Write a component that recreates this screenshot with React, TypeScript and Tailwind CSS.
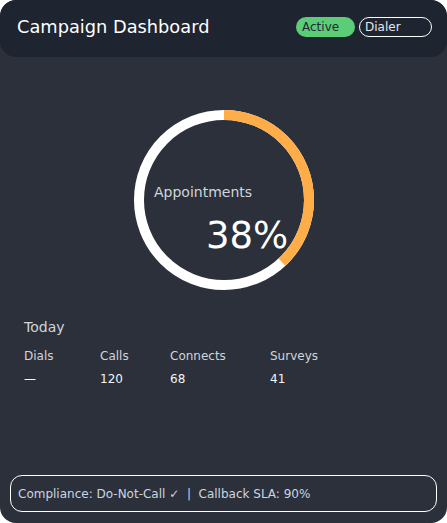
import React from "react";

const stats = [
  { label: "Dials", value: "—", w: "w-[76px]" },
  { label: "Calls", value: "120", w: "w-[70px]" },
  { label: "Connects", value: "68", w: "w-[100px]" },
  { label: "Surveys", value: "41", w: "w-[80px]" },
];

function Ring({ pct }: { pct: number }) {
  const r = 85;
  const c = 2 * Math.PI * r;
  return (
    <div className="relative w-[180px] h-[180px]">
      <svg width="180" height="180" viewBox="0 0 180 180">
        <circle cx="90" cy="90" r={r} fill="none" stroke="#ffffff" strokeWidth="10" />
        <circle
          cx="90"
          cy="90"
          r={r}
          fill="none"
          stroke="#ffad48"
          strokeWidth="10"
          strokeDasharray={`${(c * pct) / 100} ${c}`}
          transform="rotate(-90 90 90)"
        />
      </svg>
      <div className="absolute inset-0 flex flex-col pl-[20px] pt-[73px]">
        <span className="text-[14px] leading-[18px] text-[#d1d5db]">Appointments</span>
        <span className="text-[37px] leading-[40px] text-white pl-[52px] mt-[15px]">{pct}%</span>
      </div>
    </div>
  );
}

export default function App() {
  return (
    <div
      className="w-[447px] h-[523px] bg-[#2b303a] rounded-[16px] flex flex-col overflow-hidden"
      style={{ fontFamily: '"DejaVu Sans", sans-serif' }}
    >
      <div className="h-[57px] bg-[#1e2430] rounded-[16px] flex items-center justify-between pl-[17px] pr-[15px]">
        <h1 className="text-[17.8px] text-white pb-[2px]">Campaign Dashboard</h1>
        <div className="flex items-center gap-[4px] -mt-[4px]">
          <span className="w-[59px] h-[20px] rounded-full bg-[#5bcd77] text-[#1f2937] text-[12px] leading-[20px] pl-[6px]">
            Active
          </span>
          <span className="w-[73px] h-[20px] rounded-full border border-white text-[#e5e7eb] text-[12px] leading-[18px] pl-[5px]">
            Dialer
          </span>
        </div>
      </div>

      <div className="flex justify-center pt-[53px] pl-[1px]">
        <Ring pct={38} />
      </div>

      <div className="pl-[24px] pt-[27px]">
        <div className="text-[14px] text-[#d1d5db] leading-[20px]">Today</div>
        <div className="flex mt-[11px]">
          {stats.map((s) => (
            <div key={s.label} className={`${s.w} flex flex-col`}>
              <span className="text-[12px] leading-[16px] text-[#d1d5db]">{s.label}</span>
              <span className="text-[12px] leading-[16px] text-[#f3f4f6] mt-[7px]">{s.value}</span>
            </div>
          ))}
        </div>
      </div>

      <div className="mt-auto mx-[10px] mb-[11px] h-[37px] border border-white rounded-[12px] flex items-center pl-[7px]">
        <span className="text-[12px] text-[#cbd5e1] whitespace-pre">
          {"Compliance: Do-Not-Call ✓  |  Callback SLA: 90%"}
        </span>
      </div>
    </div>
  );
}
